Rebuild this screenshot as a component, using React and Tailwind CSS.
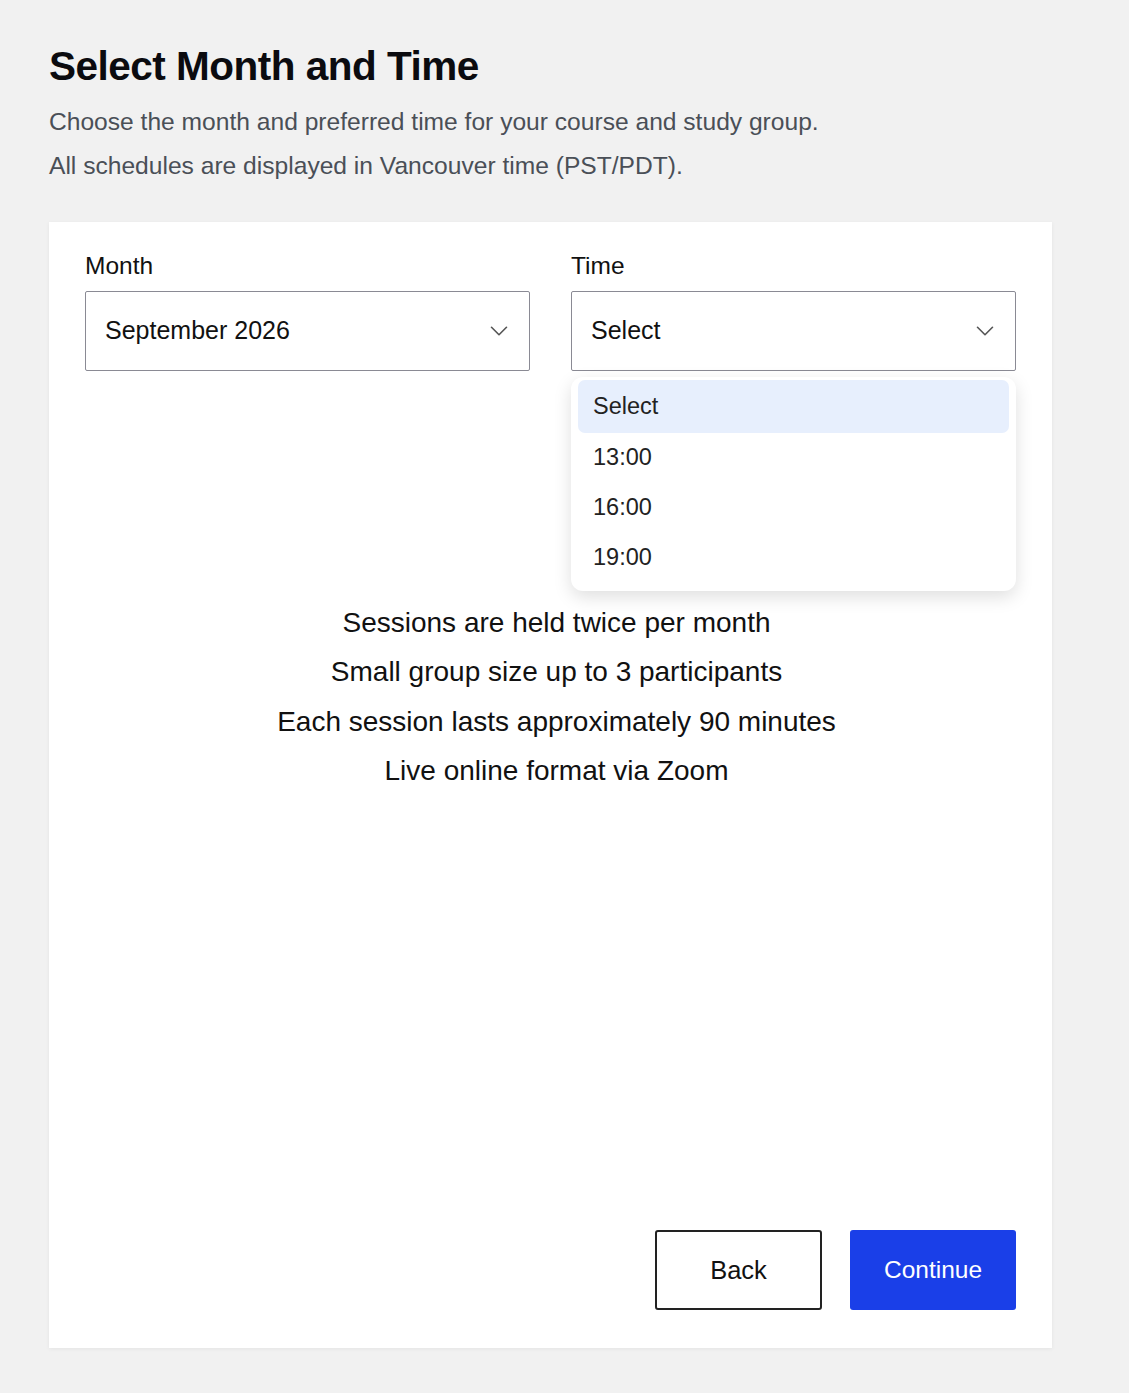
import React, { useState } from 'react';
import { ChevronDown } from 'lucide-react';

const months = ['September 2026', 'October 2026', 'November 2026'];
const times = ['Select', '13:00', '16:00', '19:00'];

const details = [
  'Sessions are held twice per month',
  'Small group size up to 3 participants',
  'Each session lasts approximately 90 minutes',
  'Live online format via Zoom',
];

const SelectBox = ({ value, onClick }) => (
  <button
    type="button"
    onClick={onClick}
    className="w-full h-[80px] flex items-center justify-between pl-[19px] pr-[15px] bg-white border border-[#8a8a94] rounded-[2px] text-[25px] text-[#111] text-left"
  >
    <span>{value}</span>
    <ChevronDown className="w-[30px] h-[30px] text-[#555]" strokeWidth={1.3} />
  </button>
);

export default function App() {
  const [month] = useState(months[0]);
  const [time, setTime] = useState('Select');
  const [open, setOpen] = useState(true);

  return (
    <div className="min-h-screen bg-[#f1f1f1] px-[49px] pt-[40px] pb-[45px] font-['Liberation_Sans',Arial,sans-serif]">
      <h1 className="text-[40.5px] font-bold text-[#0b0b0f] leading-[52px] tracking-[-0.5px]">
        Select Month and Time
      </h1>
      <p className="mt-[8px] text-[24.6px] leading-[44px] text-[#4a4f57]">
        Choose the month and preferred time for your course and study group.
        <br />
        All schedules are displayed in Vancouver time (PST/PDT).
      </p>

      <div className="mt-[34px] w-[1003px] h-[1126px] bg-white shadow-[0_1px_4px_rgba(0,0,0,0.06)] px-[36px] pt-[28px] pb-[38px] flex flex-col">
        <div className="grid grid-cols-2 gap-[41px]">
          <div>
            <label className="block text-[24.5px] text-[#111] leading-[32px] mb-[9px]">Month</label>
            <SelectBox value={month} />
          </div>
          <div className="relative">
            <label className="block text-[24.5px] text-[#111] leading-[32px] mb-[9px]">Time</label>
            <SelectBox value={time} onClick={() => setOpen(!open)} />
            {open && (
              <ul className="absolute left-0 right-0 top-[127px] z-10 bg-white rounded-[12px] shadow-[0_6px_18px_rgba(0,0,0,0.13)] px-[7px] pt-[3px] pb-[8px]">
                {times.map((t) => (
                  <li
                    key={t}
                    onClick={() => {
                      setTime(t);
                      setOpen(false);
                    }}
                    className={
                      t === time
                        ? 'h-[53px] flex items-center pl-[15px] rounded-[7px] bg-[#e7effd] text-[23.5px] text-[#222] cursor-pointer'
                        : 'h-[50px] flex items-center pl-[15px] rounded-[7px] text-[23.5px] text-[#222] cursor-pointer'
                    }
                  >
                    {t}
                  </li>
                ))}
              </ul>
            )}
          </div>
        </div>

        <ul className="mt-[236px] flex flex-col items-center gap-[17.3px] pl-[12px] text-[28px] text-[#111] leading-[32px]">
          {details.map((d) => (
            <li key={d}>{d}</li>
          ))}
        </ul>

        <div className="mt-auto flex justify-end gap-[28px]">
          <button className="w-[167px] h-[80px] border-2 border-[#222] rounded-[3px] bg-white text-[25.5px] text-[#111]">
            Back
          </button>
          <button className="w-[166px] h-[80px] rounded-[3px] bg-[#1a3fe8] text-[24.5px] text-white">
            Continue
          </button>
        </div>
      </div>
    </div>
  );
}
